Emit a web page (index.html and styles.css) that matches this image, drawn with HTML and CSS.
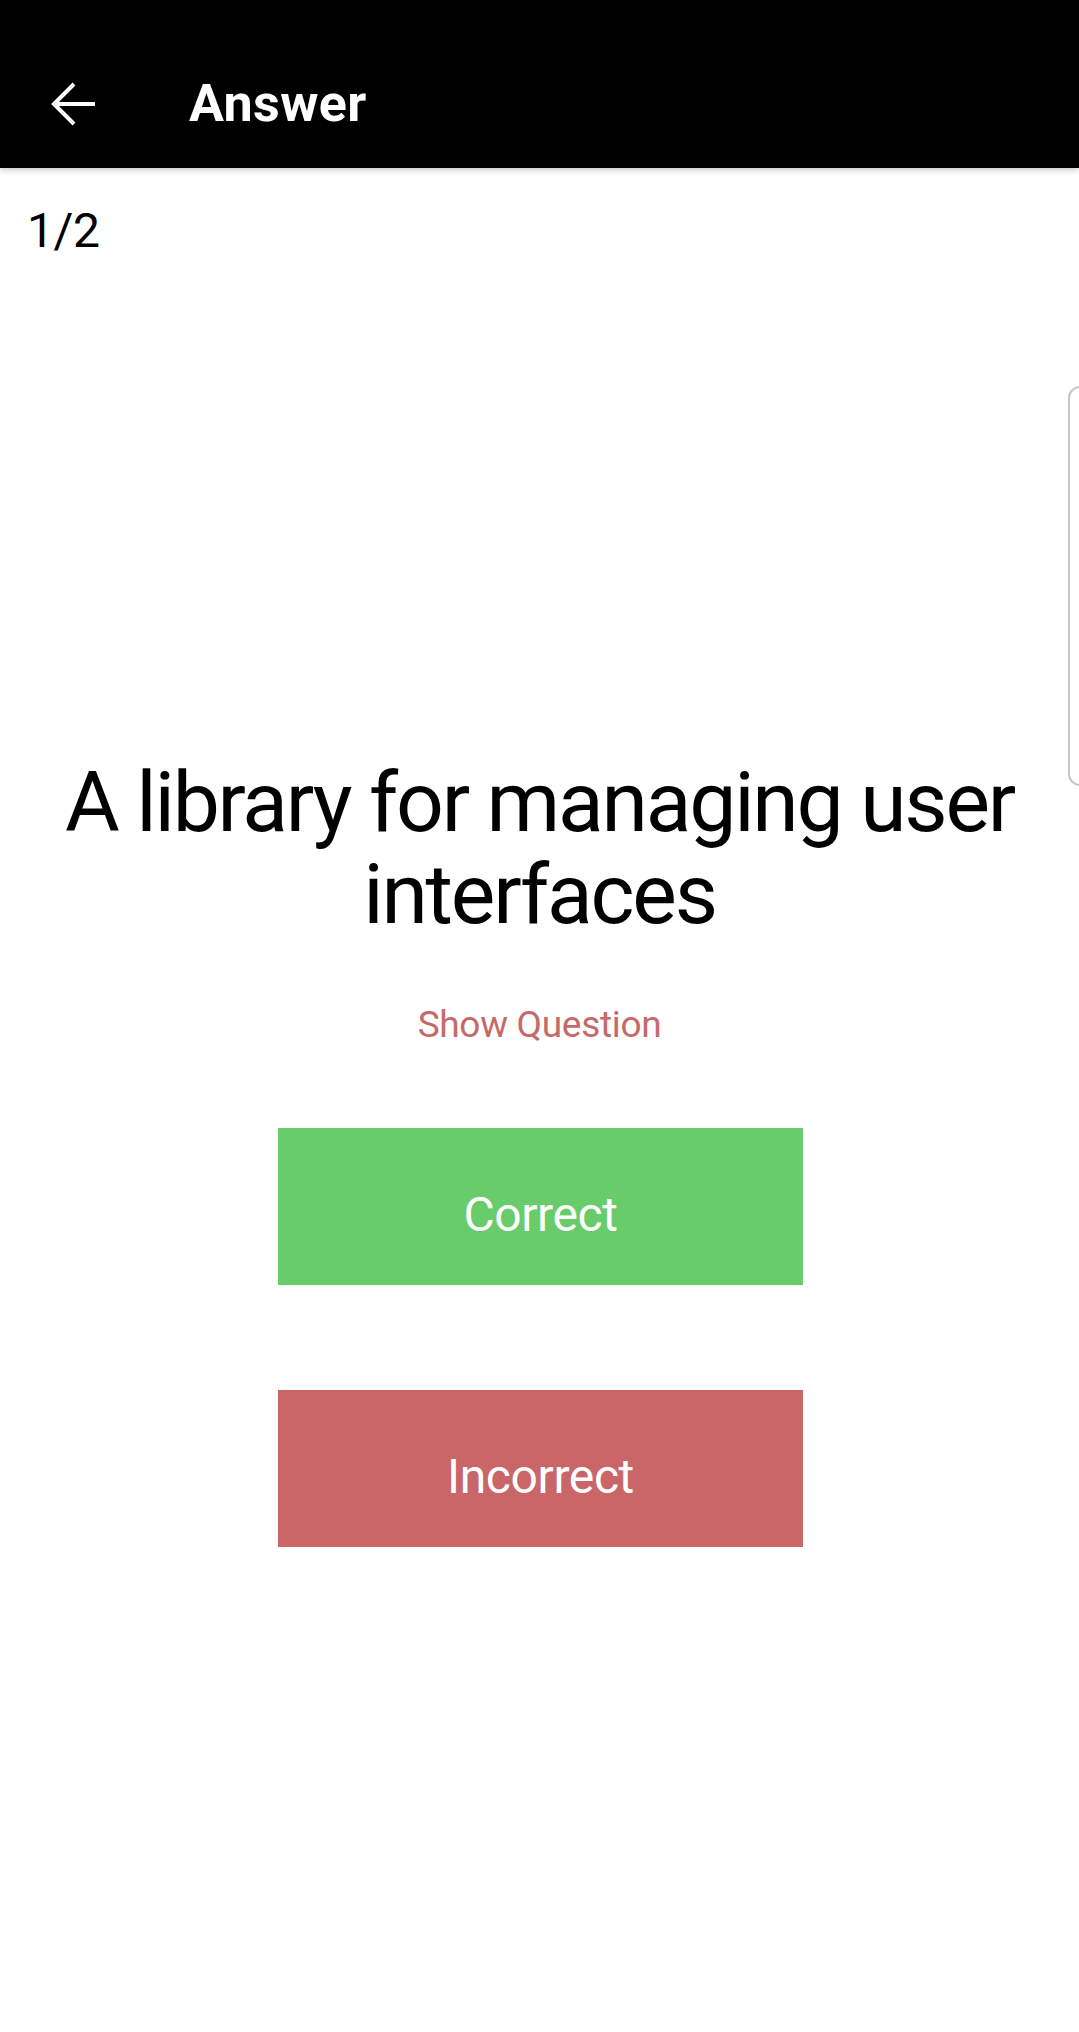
FILE: index.html
```html
<!DOCTYPE html>
<html lang="en">
<head>
<meta charset="utf-8">
<title>Answer</title>
<link rel="stylesheet" href="styles.css">
</head>
<body>
<header class="appbar">
  <svg class="back" width="46" height="44" viewBox="0 0 46 44" aria-hidden="true">
    <path d="M3 22H44M23 2L3 22L23 42" fill="none" stroke="#fff" stroke-width="4"/>
  </svg>
  <h1 class="title">Answer</h1>
</header>
<main class="content">
  <div class="counter">1/2</div>
  <div class="card">
    <p class="answer">A library for managing user interfaces</p>
    <div class="show-question">Show Question</div>
    <div class="actions">
      <div class="btn btn-correct">Correct</div>
      <div class="btn btn-incorrect">Incorrect</div>
    </div>
  </div>
  <div class="peek"></div>
</main>
</body>
</html>
```
FILE: styles.css
```css
html, body {
  margin: 0;
  padding: 0;
  background: #fff;
}
body {
  width: 1079px;
  height: 2032px;
  overflow: hidden;
  font-family: Roboto, "Noto Sans", "Liberation Sans", sans-serif;
  color: #000;
}
.appbar {
  position: relative;
  z-index: 2;
  height: 168px;
  box-sizing: border-box;
  padding: 40px 0 0 51px;
  background: #000;
  display: flex;
  align-items: center;
  box-shadow: 0 2px 6px rgba(0, 0, 0, 0.22);
}
.back {
  display: block;
  flex: none;
}
.title {
  margin: 0 0 0 92px;
  font-size: 52px;
  font-weight: 700;
  color: #fff;
  line-height: 60px;
  letter-spacing: 0.4px;
}
.content {
  position: relative;
  padding-top: 1px;
}
.counter {
  margin: 34px 0 0 27px;
  font-size: 48px;
  line-height: 56px;
  letter-spacing: -0.4px;
}
.card {
  display: flex;
  flex-direction: column;
  align-items: center;
}
.answer {
  margin: 498px 0 0;
  padding: 0 30px;
  font-size: 84px;
  line-height: 92px;
  letter-spacing: -2.2px;
  text-align: center;
}
.show-question {
  margin-top: 62px;
  font-size: 37px;
  line-height: 44px;
  letter-spacing: -0.3px;
  color: #c56969;
}
.actions {
  margin-top: 81px;
  display: flex;
  flex-direction: column;
  gap: 105px;
  padding-left: 2px;
}
.btn {
  width: 525px;
  height: 157px;
  box-sizing: border-box;
  padding-top: 17px;
  display: flex;
  align-items: center;
  justify-content: center;
  color: #fff;
  font-size: 48px;
  line-height: 56px;
  letter-spacing: -0.4px;
}
.btn-correct {
  background: #69cc6a;
}
.btn-incorrect {
  background: #ca6667;
}
.peek {
  position: absolute;
  left: 1068px;
  top: 218px;
  width: 60px;
  height: 396px;
  border: 2px solid #c6c6c6;
  border-radius: 12px;
}
```
